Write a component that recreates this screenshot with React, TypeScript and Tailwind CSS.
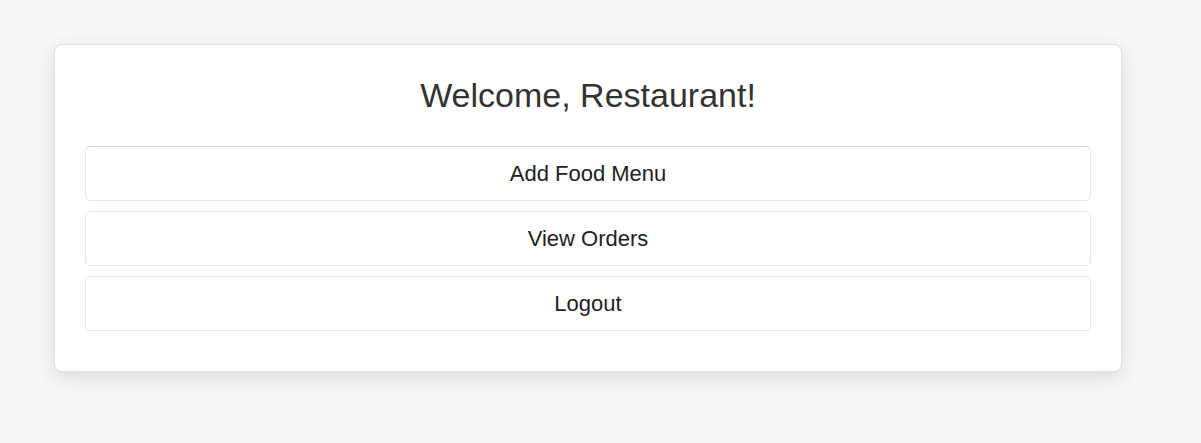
export default function App() {
  const actions = ['Add Food Menu', 'View Orders', 'Logout'];

  return (
    <div className="min-h-[443px] w-full bg-[#f7f8fa] pt-[44px] font-['Liberation_Sans',Arial,sans-serif]">
      <div className="ml-[54px] w-[1068px] rounded-lg border border-[#e0e0e0] bg-white px-[30px] pt-[30px] pb-[40px] shadow-[0_6px_20px_rgba(0,0,0,0.12)]">
        <h2 className="text-center text-[34px] leading-[41px] text-[#333333]">Welcome, Restaurant!</h2>
        <div className="mt-[30px] flex flex-col gap-[10px]">
          {actions.map((label, i) => (
            <button
              key={label}
              className={`h-[55px] w-full rounded-[5px] border border-[#e8e8e8] bg-white text-center text-[22px] text-[#222222] ${
                i === 0 ? 'border-t-[#d2d2d2]' : ''
              }`}
            >
              {label}
            </button>
          ))}
        </div>
      </div>
    </div>
  );
}
